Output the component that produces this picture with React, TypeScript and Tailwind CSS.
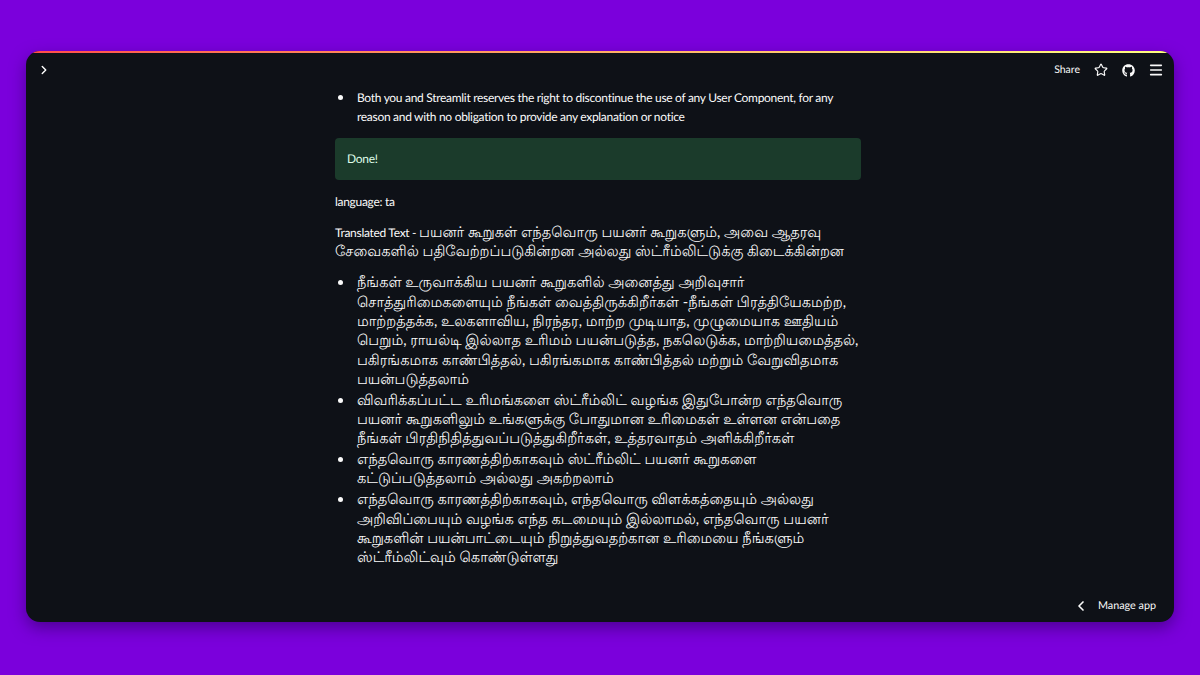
import { ChevronLeft, ChevronRight, Menu, Star } from "lucide-react";
import { FaGithub } from "react-icons/fa";

const latin = "text-[12px] tracking-[-0.3px]";

const bullets = [
  [
    "நீங்கள் உருவாக்கிய பயனர் கூறுகளில் அனைத்து அறிவுசார்",
    "சொத்துரிமைகளையும் நீங்கள் வைத்திருக்கிறீர்கள் -நீங்கள் பிரத்தியேகமற்ற,",
    "மாற்றத்தக்க, உலகளாவிய, நிரந்தர, மாற்ற முடியாத, முழுமையாக ஊதியம்",
    "பெறும், ராயல்டி இல்லாத உரிமம் பயன்படுத்த, நகலெடுக்க, மாற்றியமைத்தல்,",
    "பகிரங்கமாக காண்பித்தல், பகிரங்கமாக காண்பித்தல் மற்றும் வேறுவிதமாக",
    "பயன்படுத்தலாம்",
  ],
  [
    "விவரிக்கப்பட்ட உரிமங்களை ஸ்ட்ரீம்லிட் வழங்க இதுபோன்ற எந்தவொரு",
    "பயனர் கூறுகளிலும் உங்களுக்கு போதுமான உரிமைகள் உள்ளன என்பதை",
    "நீங்கள் பிரதிநிதித்துவப்படுத்துகிறீர்கள், உத்தரவாதம் அளிக்கிறீர்கள்",
  ],
  ["எந்தவொரு காரணத்திற்காகவும் ஸ்ட்ரீம்லிட் பயனர் கூறுகளை", "கட்டுப்படுத்தலாம் அல்லது அகற்றலாம்"],
  [
    "எந்தவொரு காரணத்திற்காகவும், எந்தவொரு விளக்கத்தையும் அல்லது",
    "அறிவிப்பையும் வழங்க எந்த கடமையும் இல்லாமல், எந்தவொரு பயனர்",
    "கூறுகளின் பயன்பாட்டையும் நிறுத்துவதற்கான உரிமையை நீங்களும்",
    "ஸ்ட்ரீம்லிட்வும் கொண்டுள்ளது",
  ],
];

function Lines({ lines }: { lines: string[] }) {
  return (
    <>
      {lines.map((line) => (
        <div key={line} className="whitespace-nowrap">
          {line}
        </div>
      ))}
    </>
  );
}

function Bullet({ children }: { children: React.ReactNode }) {
  return (
    <div className="flex">
      <div className="w-[22px] shrink-0 pl-[3px] pt-[7px]">
        <div className="h-[5px] w-[5px] rounded-full bg-[#fafafa]" />
      </div>
      <div>{children}</div>
    </div>
  );
}

export default function App() {
  return (
    <div className="h-[675px] w-[1200px] overflow-hidden bg-[#7b00dc] px-[26px] pt-[51px] font-['Lato','Noto_Sans',sans-serif] [text-rendering:geometricPrecision]">
      <div className="relative h-[571px] overflow-hidden rounded-[14px] bg-[#0e1117] shadow-[0_6px_16px_rgba(40,0,90,0.55)]">
        <div className="h-[2px] bg-gradient-to-r from-[#ff4b4b] to-[#fffd80]" />

        {/* toolbar */}
        <div className="flex h-[34px] items-center justify-between pl-[11px] pr-[10px] text-[#fafafa]">
          <ChevronRight size={14} strokeWidth={2.5} />
          <div className="flex items-center">
            <span className="mr-[14px] pt-[1px] text-[10.5px]">Share</span>
            <Star size={14} strokeWidth={2} className="mr-[14px]" />
            <FaGithub size={13} className="mr-[13px]" />
            <Menu size={16} strokeWidth={2.4} />
          </div>
        </div>

        {/* main column */}
        <div className="ml-[309px] mt-[1px] w-[526px] text-[14.6px] leading-[19.3px] text-[#fafafa]">
          <Bullet>
            <div className={`${latin} whitespace-nowrap`}>
              Both you and Streamlit reserves the right to discontinue the use of any User Component, for any
            </div>
            <div className={`${latin} whitespace-nowrap`}>
              reason and with no obligation to provide any explanation or notice
            </div>
          </Bullet>

          <div className={`${latin} mt-[11px] flex h-[42px] items-center rounded-[4px] bg-[#1b3b2b] px-[12px] text-[#dffde9]`}>
            Done!
          </div>

          <p className={`${latin} mt-[12px]`}>language: ta</p>

          <div className="mt-[12px]">
            <div className="whitespace-nowrap">
              <span className={latin}>Translated Text - </span>
              பயனர் கூறுகள் எந்தவொரு பயனர் கூறுகளும், அவை ஆதரவு
            </div>
            <div className="whitespace-nowrap">சேவைகளில் பதிவேற்றப்படுகின்றன அல்லது ஸ்ட்ரீம்லிட்டுக்கு கிடைக்கின்றன</div>
          </div>

          <div className="mt-[12px] flex flex-col gap-[1.5px]">
            {bullets.map((lines) => (
              <Bullet key={lines[0]}>
                <Lines lines={lines} />
              </Bullet>
            ))}
          </div>
        </div>

        <div className="absolute bottom-[8px] right-[18px] flex items-center text-[10.8px] text-[#fafafa]">
          <ChevronLeft size={16} strokeWidth={2.5} className="mr-[9px]" />
          <span>Manage app</span>
        </div>
      </div>
    </div>
  );
}
